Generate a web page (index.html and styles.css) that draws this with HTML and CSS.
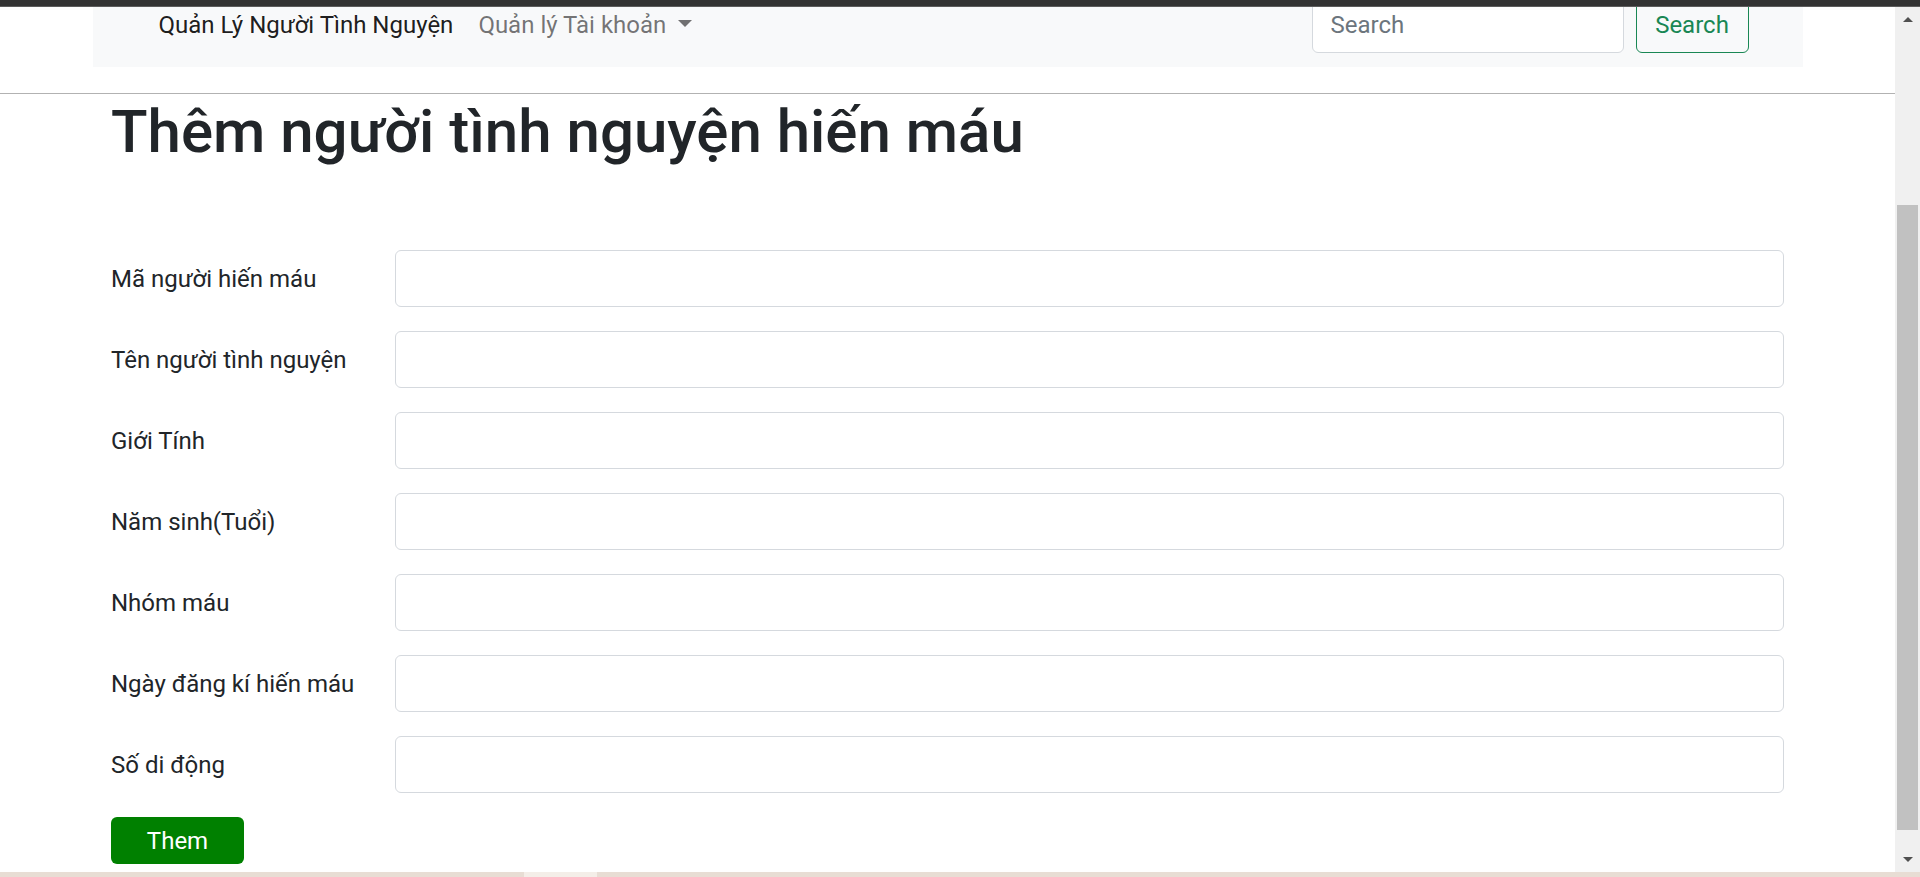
FILE: index.html
```html
<!DOCTYPE html>
<html lang="vi">
<head>
<meta charset="utf-8">
<title>Thêm người tình nguyện hiến máu</title>
<link rel="stylesheet" href="styles.css">
</head>
<body>
<div class="chrome-top"></div>
<div class="window">
  <div class="viewport">
    <div class="page">
      <nav class="navbar">
        <a class="brand" href="#">Quản Lý Người Tình Nguyện</a>
        <a class="nav-link dropdown-toggle" href="#">Quản lý Tài khoản</a>
        <form class="search-form">
          <input class="search-input" type="search" placeholder="Search">
          <button class="search-btn" type="button">Search</button>
        </form>
      </nav>
      <hr class="sep">
      <main class="container">
        <h1 class="title">Thêm người tình nguyện hiến máu</h1>
        <form class="donor-form">
          <div class="form-grid">
            <label class="form-label">Mã người hiến máu</label>
            <input class="form-control" type="text">
            <label class="form-label">Tên người tình nguyện</label>
            <input class="form-control" type="text">
            <label class="form-label">Giới Tính</label>
            <input class="form-control" type="text">
            <label class="form-label">Năm sinh(Tuổi)</label>
            <input class="form-control" type="text">
            <label class="form-label">Nhóm máu</label>
            <input class="form-control" type="text">
            <label class="form-label">Ngày đăng kí hiến máu</label>
            <input class="form-control" type="text">
            <label class="form-label">Số di động</label>
            <input class="form-control" type="text">
          </div>
          <button class="btn-add" type="button">Them</button>
        </form>
      </main>
    </div>
  </div>
  <div class="scrollbar">
    <div class="sb-btn"><span class="arrow-up"></span></div>
    <div class="sb-track"><div class="sb-thumb"></div></div>
    <div class="sb-btn"><span class="arrow-down"></span></div>
  </div>
</div>
<div class="bottom-strip"><span class="strip-seg"></span></div>
</body>
</html>
```

FILE: styles.css
```css
* { box-sizing: border-box; }

html, body {
  margin: 0;
  padding: 0;
  height: 877px;
  overflow: hidden;
}

body {
  display: flex;
  flex-direction: column;
  font-family: Roboto, "Liberation Sans", sans-serif;
  background: #ffffff;
  color: #212529;
}

.chrome-top {
  height: 7px;
  flex: none;
  background: #333333;
  border-bottom: 1px solid #5c5c5c;
}

.window {
  flex: 1;
  display: flex;
  min-height: 0;
}

.viewport {
  flex: 1;
  overflow: hidden;
  background: #ffffff;
}

.page {
  margin-top: -25px;
}

/* navbar */
.navbar {
  width: 1710px;
  height: 85px;
  margin: 0 auto;
  padding: 14px 54px 14px 66px;
  background: #f8f9fa;
  display: flex;
  align-items: center;
}

.brand {
  font-size: 24px;
  line-height: 36px;
  color: rgba(0, 0, 0, 0.9);
  text-decoration: none;
  margin-right: 13px;
}

.nav-link {
  font-size: 24px;
  line-height: 36px;
  color: rgba(0, 0, 0, 0.55);
  text-decoration: none;
  padding: 0 12px;
  display: flex;
  align-items: center;
}

.dropdown-toggle::after {
  content: "";
  display: inline-block;
  margin-left: 12px;
  margin-top: -3px;
  border-top: 7px solid currentColor;
  border-left: 7px solid transparent;
  border-right: 7px solid transparent;
}

.search-form {
  margin-left: auto;
  display: flex;
  gap: 12px;
}

.search-input {
  width: 312px;
  height: 57px;
  padding: 9px 18px;
  font-family: Roboto, "Liberation Sans", sans-serif;
  font-size: 24px;
  color: #212529;
  background: #ffffff;
  border: 1.5px solid #d5d9de;
  border-radius: 6px;
  outline: none;
}

.search-input::placeholder { color: #6c757d; }

.search-btn {
  width: 113px;
  height: 57px;
  padding: 9px 18px;
  font-family: Roboto, "Liberation Sans", sans-serif;
  font-size: 24px;
  color: #198754;
  background: transparent;
  border: 1.5px solid #198754;
  border-radius: 6px;
}

.sep {
  margin: 26px 0 0;
  height: 0;
  border: 0;
  border-top: 1px solid #b2b2b2;
}

/* content */
.container {
  padding: 0 111px;
}

.title {
  margin: 2px 0 0;
  font-size: 60px;
  line-height: 72px;
  font-weight: 500;
  color: #212529;
}

.donor-form {
  margin-top: 82px;
}

.form-grid {
  display: grid;
  grid-template-columns: 284px 1fr;
  row-gap: 24px;
  align-items: center;
}

.form-label {
  font-size: 24px;
  line-height: 36px;
  color: #212529;
}

.form-control {
  height: 57px;
  width: 100%;
  padding: 9px 18px;
  font-family: Roboto, "Liberation Sans", sans-serif;
  font-size: 24px;
  background: #ffffff;
  border: 1.5px solid #d5d9de;
  border-radius: 6px;
  outline: none;
}

.btn-add {
  margin-top: 24px;
  width: 133px;
  height: 47px;
  padding: 0;
  font-family: Roboto, "Liberation Sans", sans-serif;
  font-size: 24px;
  color: #ffffff;
  background: #008000;
  border: 0;
  border-radius: 6px;
}

/* fake scrollbar */
.scrollbar {
  width: 25px;
  flex: none;
  background: #f0f0f0;
  display: flex;
  flex-direction: column;
}

.sb-btn {
  height: 25px;
  flex: none;
  display: flex;
  align-items: center;
  justify-content: center;
}

.arrow-up {
  width: 0;
  height: 0;
  border-left: 5px solid transparent;
  border-right: 5px solid transparent;
  border-bottom: 5px solid #505050;
}

.arrow-down {
  width: 0;
  height: 0;
  border-left: 5px solid transparent;
  border-right: 5px solid transparent;
  border-top: 5px solid #505050;
}

.sb-track {
  flex: 1;
  padding-top: 173px;
}

.sb-thumb {
  margin-left: 2px;
  width: 21px;
  height: 625px;
  background: #c1c1c1;
}

.bottom-strip {
  height: 5px;
  flex: none;
  background: #e8ddd4;
  padding-left: 524px;
}

.strip-seg {
  display: block;
  width: 73px;
  height: 5px;
  background: #f4eee8;
}
```
